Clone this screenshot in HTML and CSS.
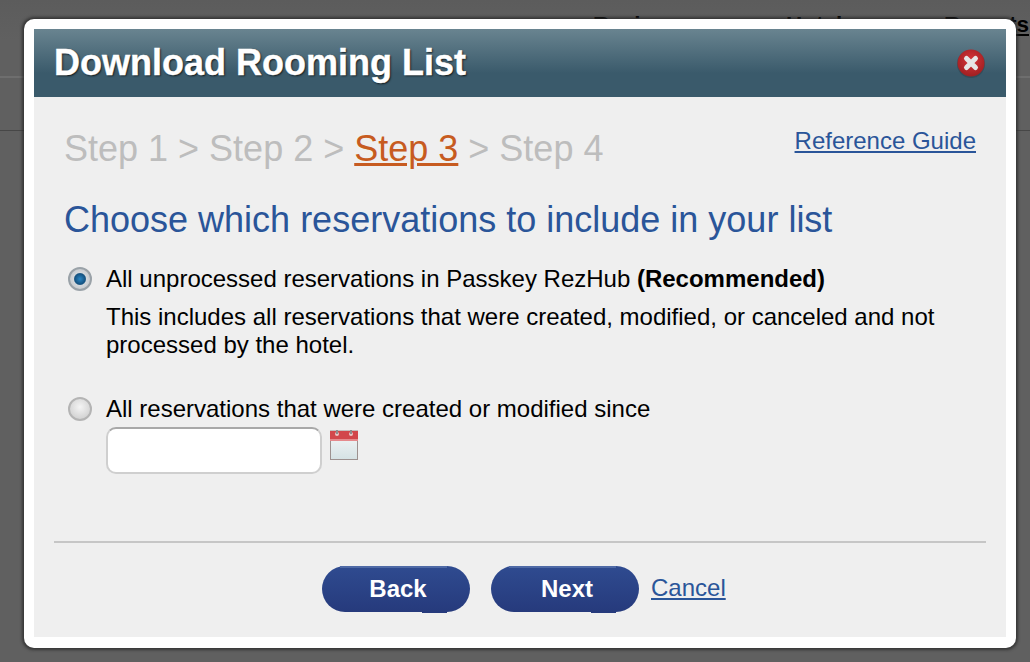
FILE: index.html
```html
<!DOCTYPE html>
<html lang="en">
<head>
    <meta charset="UTF-8">
    <title>Download Rooming List</title>
    <link rel="stylesheet" href="styles.css">
</head>
<body>

    <div class="backdrop">
        <span class="back-link one">Review</span>
        <span class="back-link two">Hotels</span>
        <span class="back-link three"><u>Reports</u></span>
        <div class="back-line line-top"></div>
        <div class="back-line line-bottom"></div>
    </div>

    <div class="dialog">
        <div class="dialog-inner">
            <div class="dialog-header">
                <h1 class="dialog-title">Download Rooming List</h1>
                <svg class="close-icon" width="30" height="30" viewBox="0 0 30 30">
                    <defs>
                        <radialGradient id="closeFill" cx="50%" cy="40%" r="60%">
                            <stop offset="0" stop-color="#d8363a"/>
                            <stop offset="1" stop-color="#a01f22"/>
                        </radialGradient>
                    </defs>
                    <circle cx="15" cy="16" r="14" fill="#2c3f4a" opacity="0.5"/>
                    <circle cx="15" cy="15" r="13.5" fill="url(#closeFill)"/>
                    <path d="M10.5 10.5 L19.5 19.5 M19.5 10.5 L10.5 19.5" stroke="#e6e6e6" stroke-width="5" stroke-linecap="round"/>
                </svg>
            </div>

            <div class="dialog-body">
                <div class="steps-row">
                    <p class="steps">Step 1 &gt; Step 2 &gt; <a class="step-current" href="#">Step 3</a> &gt; Step 4</p>
                    <a class="link guide-link" href="#">Reference Guide</a>
                </div>

                <h2 class="choose-title">Choose which reservations to include in your list</h2>

                <div class="option option-first">
                    <span class="radio radio-on"></span>
                    <div class="option-text">
                        <p class="option-label">All unprocessed reservations in Passkey RezHub <b>(Recommended)</b></p>
                        <p class="option-note">This includes all reservations that were created, modified, or canceled and not processed by the hotel.</p>
                    </div>
                </div>

                <div class="option option-second">
                    <span class="radio"></span>
                    <div class="option-text">
                        <p class="option-label">All reservations that were created or modified since</p>
                        <div class="date-row">
                            <input class="date-input" type="text">
                            <svg class="calendar-icon" width="28" height="30" viewBox="0 0 28 30">
                                <defs>
                                    <linearGradient id="calBody" x1="0" y1="0" x2="0" y2="1">
                                        <stop offset="0" stop-color="#f6f8f8"/>
                                        <stop offset="1" stop-color="#d5e2e4"/>
                                    </linearGradient>
                                </defs>
                                <rect x="0.5" y="1" width="27" height="28.5" fill="url(#calBody)" stroke="#9c918f"/>
                                <rect x="0" y="1" width="28" height="10" fill="#d2474b"/>
                                <rect x="0" y="9" width="28" height="2" fill="#e58a8c"/>
                                <circle cx="7" cy="4" r="2" fill="#e9c4c4"/>
                                <circle cx="21" cy="4" r="2" fill="#e9c4c4"/>
                                <rect x="6" y="0" width="2" height="4" fill="#8d8d8d"/>
                                <rect x="20" y="0" width="2" height="4" fill="#8d8d8d"/>
                            </svg>
                        </div>
                    </div>
                </div>
            </div>

            <div class="dialog-footer">
                <button class="pill-btn" type="button">Back</button>
                <button class="pill-btn" type="button">Next</button>
                <a class="link" href="#">Cancel</a>
            </div>
        </div>
    </div>

</body>
</html>
```

FILE: styles.css
```css
html, body {
    margin: 0;
    padding: 0;
    height: 662px;
    overflow: hidden;
}
body {
    background: #606060;
    font-family: "Liberation Sans", Arial, sans-serif;
    color: #000;
}
p, h1, h2 {
    margin: 0;
    font-weight: normal;
}
a {
    color: #2a5599;
}

/* page behind the overlay */
.backdrop {
    position: absolute;
    inset: 0;
    background: linear-gradient(#5c5c5c, #606060 40px);
}
.back-link {
    position: absolute;
    top: 12px;
    font-size: 22.5px;
    font-weight: bold;
    color: #000;
}
.back-link.one { left: 593px; }
.back-link.two { left: 786px; }
.back-link.three { left: 944px; }
.back-line {
    position: absolute;
    left: 0;
    right: 0;
    height: 2px;
}
.line-top { top: 76px; background: #6e6e6e; }
.line-bottom { top: 130px; height: 1px; background: #474747; }

.dialog {
    position: relative;
    box-sizing: border-box;
    width: 992px;
    height: 629px;
    margin: 19px 0 0 24px;
    padding: 10px 10px 11px;
    background: #fff;
    border-radius: 10px;
    box-shadow: 0 0 3px 2px rgba(40, 40, 40, 0.75);
}
.dialog-inner {
    display: flex;
    flex-direction: column;
    height: 100%;
    background: #efefef;
}
.dialog-header {
    display: flex;
    justify-content: space-between;
    align-items: center;
    height: 68px;
    padding: 0 20px 0 20px;
    background: linear-gradient(#698490, #3a5a6b 65%);
}
.dialog-title {
    font-size: 36px;
    font-weight: bold;
    color: #fff;
    -webkit-text-stroke: 0.4px #fff;
    text-shadow: 1px 1px 2px rgba(0, 0, 0, 0.8);
}
.close-icon {
    margin-top: -1px;
}

.dialog-body {
    flex: 1;
    padding: 0 30px 0 30px;
}
.steps-row {
    display: flex;
    justify-content: space-between;
    align-items: flex-start;
    padding-top: 31px;
}
.steps {
    font-size: 36px;
    line-height: 42px;
    color: #bdbdbd;
}
.step-current {
    color: #c75b20;
}
.link {
    font-size: 24px;
}
.guide-link {
    margin-top: -1px;
}
.choose-title {
    margin-top: 30px;
    font-size: 36px;
    line-height: 40px;
    color: #2a5599;
}
.option {
    display: flex;
    font-size: 24px;
}
.option-first {
    margin-top: 25px;
}
.option-second {
    margin-top: 36px;
}
.radio {
    box-sizing: border-box;
    flex: none;
    width: 24px;
    height: 24px;
    margin: 2px 14px 0 4px;
    border-radius: 50%;
    border: 2px solid #b4b4b4;
    background: radial-gradient(circle at 50% 40%, #f4f4f4, #c8c8c8);
}
.radio-on {
    border-color: #9aa2a8;
    background: radial-gradient(circle, #2b86c4 0, #14517f 38%, #d4d8dc 46%, #b8bcc0 100%);
}
.option-label {
    line-height: 28px;
}
.option-note {
    margin-top: 10px;
    line-height: 28px;
}
.date-row {
    display: flex;
    align-items: flex-start;
    margin-top: 4px;
}
.date-input {
    box-sizing: border-box;
    width: 216px;
    height: 47px;
    background: #fff;
    border: 2px solid #cfcfcf;
    border-top-color: #a8a8a8;
    border-radius: 10px;
    outline: none;
}
.calendar-icon {
    margin: 3px 0 0 8px;
}

.dialog-footer {
    display: flex;
    align-items: flex-start;
    margin: 0 20px;
    height: 96px;
    box-sizing: border-box;
    padding: 23px 0 0 268px;
    border-top: 2px solid #c6c6c6;
}
.pill-btn {
    position: relative;
    width: 148px;
    height: 46px;
    margin-right: 21px;
    padding: 0 0 0 4px;
    border: none;
    border-radius: 23px;
    background: linear-gradient(#2f4b90, #263a7c);
    font-family: inherit;
    font-size: 24px;
    font-weight: bold;
    color: #fff;
}
/* the button image has a light strip on top and a darker one below */
.pill-btn::before {
    content: "";
    position: absolute;
    top: 0;
    left: 18px;
    width: 107px;
    height: 2px;
    background: #4f6aa6;
}
.pill-btn::after {
    content: "";
    position: absolute;
    bottom: -1px;
    left: 100px;
    width: 25px;
    height: 1px;
    background: #263a7c;
}
.dialog-footer .pill-btn + .pill-btn {
    margin-right: 12px;
}
.dialog-footer .link {
    line-height: 44px;
}
```
